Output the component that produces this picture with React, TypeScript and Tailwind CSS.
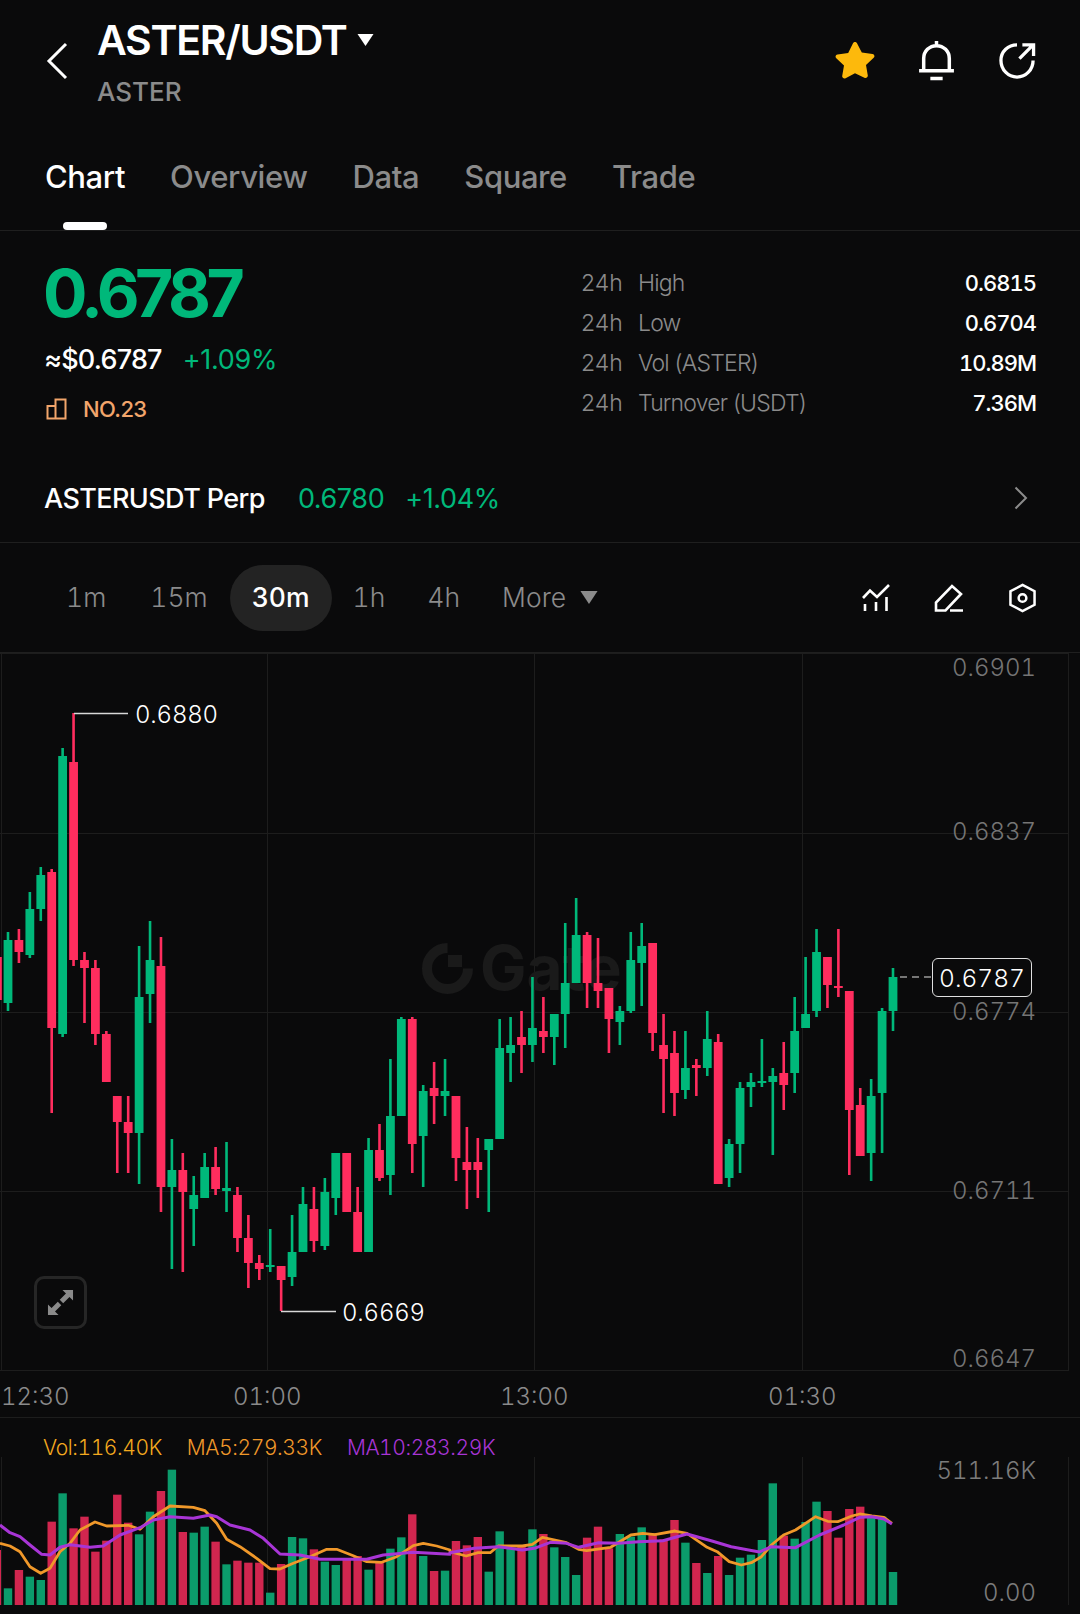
const GREEN = '#00b87a'
const RED = '#ff2d5e'

// g/r, wick top, body top, body bottom, wick bottom (page px)
const candles: [string, number, number, number, number][] = [
  ['g', 932, 940, 1003, 1011], ['r', 929, 940, 952, 963], ['g', 892, 909, 955, 958], ['g', 867, 875, 909, 921],
  ['r', 869, 872, 1028, 1113], ['g', 748, 756, 1034, 1037], ['r', 713, 762, 960, 966], ['r', 952, 960, 968, 1023],
  ['r', 960, 968, 1034, 1045], ['r', 1031, 1034, 1082, 1082], ['r', 1096, 1096, 1122, 1173], ['r', 1096, 1122, 1133, 1173],
  ['g', 946, 997, 1133, 1184], ['g', 921, 960, 994, 1023], ['r', 937, 966, 1187, 1212], ['g', 1139, 1170, 1187, 1269],
  ['r', 1153, 1170, 1192, 1272], ['g', 1176, 1195, 1209, 1246], ['g', 1153, 1167, 1198, 1198], ['r', 1147, 1167, 1189, 1195],
  ['g', 1142, 1188, 1191, 1212], ['r', 1187, 1195, 1238, 1252], ['r', 1215, 1238, 1263, 1288], ['r', 1255, 1263, 1269, 1280],
  ['g', 1229, 1265, 1267, 1272], ['r', 1266, 1266, 1280, 1311], ['g', 1215, 1252, 1277, 1286], ['g', 1187, 1204, 1252, 1252],
  ['r', 1187, 1209, 1241, 1252], ['g', 1178, 1192, 1246, 1250], ['g', 1153, 1153, 1198, 1215], ['r', 1153, 1153, 1212, 1212],
  ['r', 1187, 1212, 1252, 1252], ['g', 1138, 1150, 1252, 1252], ['r', 1124, 1150, 1178, 1181], ['g', 1059, 1116, 1175, 1195],
  ['g', 1017, 1019, 1116, 1116], ['r', 1017, 1019, 1144, 1173], ['g', 1085, 1091, 1136, 1187], ['r', 1062, 1088, 1096, 1124],
  ['g', 1059, 1091, 1096, 1116], ['r', 1096, 1096, 1158, 1181], ['r', 1127, 1162, 1170, 1209], ['r', 1138, 1162, 1170, 1198],
  ['g', 1139, 1139, 1150, 1212], ['g', 1019, 1048, 1139, 1139], ['g', 1017, 1045, 1053, 1082], ['r', 1011, 1037, 1045, 1073],
  ['g', 977, 1028, 1045, 1062], ['r', 997, 1031, 1037, 1053], ['g', 1014, 1014, 1037, 1065], ['g', 923, 983, 1014, 1048],
  ['g', 898, 935, 983, 983], ['r', 932, 935, 983, 1008], ['r', 938, 983, 991, 1008], ['r', 988, 988, 1019, 1053],
  ['g', 1006, 1011, 1022, 1045], ['g', 932, 960, 1011, 1013], ['g', 923, 946, 963, 1006], ['r', 943, 943, 1033, 1051],
  ['r', 1014, 1045, 1059, 1113], ['r', 1031, 1053, 1093, 1116], ['g', 1031, 1068, 1090, 1099], ['r', 1059, 1065, 1068, 1096],
  ['g', 1011, 1039, 1068, 1076], ['r', 1034, 1042, 1184, 1184], ['g', 1139, 1144, 1178, 1187], ['g', 1082, 1088, 1144, 1173],
  ['g', 1073, 1082, 1087, 1107], ['g', 1039, 1081, 1083, 1087], ['g', 1068, 1076, 1082, 1155], ['r', 1042, 1073, 1085, 1110],
  ['g', 997, 1031, 1073, 1093], ['g', 957, 1014, 1028, 1028], ['g', 929, 952, 1011, 1017], ['r', 957, 957, 985, 1008],
  ['r', 929, 986, 988, 997], ['r', 991, 991, 1110, 1175], ['r', 1088, 1105, 1156, 1156], ['g', 1079, 1096, 1153, 1181],
  ['g', 1008, 1011, 1093, 1153], ['g', 968, 977, 1011, 1031],
]

// tops of the volume bars, read at 3x from y=1420
const volTops = [
  505, 450, 470, 480, 305, 220, 325, 290, 395, 362, 224, 308, 343, 275, 213, 149, 336, 338, 320, 365, 433, 422, 428, 428,
  518, 432, 351, 355, 388, 425, 435, 420, 408, 449, 428, 386, 352, 283, 408, 453, 452, 363, 376, 351, 455, 334, 385, 380,
  328, 342, 382, 411, 465, 353, 320, 385, 342, 350, 322, 340, 358, 300, 368, 429, 459, 408, 465, 413, 404, 360, 190, 347,
  356, 306, 245, 273, 353, 267, 260, 290, 290, 456,
]

const ma5Left = [[0,370],[30,378],[60,395],[90,440],[122,460],[150,445],[180,395],[210,370],[240,330],[285,306],[320,318],[385,316],[420,328],[460,290],[510,258],[580,262],[615,272],[650,310],[680,358],[720,380],[770,415],[810,446],[840,447],[880,430],[930,410],[980,388],[1010,388],[1060,407],[1100,425],[1145,427],[1190,410],[1240,377],[1270,370],[1310,378],[1350,390]]
const ma5Right = [[0,395],[40,408],[70,398],[100,398],[120,378],[180,378],[205,373],[230,352],[290,368],[320,388],[340,392],[400,382],[450,345],[480,340],[510,344],[560,333],[590,340],[640,382],[665,395],[695,425],[725,435],[750,428],[775,410],[800,375],[830,345],[860,330],[910,290],[940,304],[965,305],[1000,288],[1020,282],[1050,288],[1080,292],[1100,310]]
const ma10Left = [[0,315],[30,338],[60,350],[90,375],[125,403],[150,405],[180,382],[210,374],[270,382],[310,378],[360,345],[420,323],[460,300],[510,290],[580,295],[630,285],[650,290],[690,315],[750,330],[790,355],[840,402],[900,405],[960,418],[1040,418],[1100,418],[1150,405],[1240,397],[1350,403]]
const ma10Right = [[0,398],[60,385],[120,380],[180,390],[210,385],[250,367],[290,370],[320,382],[370,368],[420,370],[470,365],[530,362],[590,342],[650,362],[700,380],[770,396],[800,380],[860,383],[920,345],[980,315],[1020,292],[1050,290],[1080,297],[1100,312]]

const toPoints = (left: number[][], right: number[][]) =>
  [
    ...left.map(([x, y]) => `${(x / 3).toFixed(1)},${(1420 + y / 3).toFixed(1)}`),
    ...right.map(([x, y]) => `${(450 + x / 2.489).toFixed(1)},${(1420 + y / 3).toFixed(1)}`),
  ].join(' ')

const candleX = (i: number) => 8 + i * 10.926

const Triangle = ({ className, color }: { className: string; color: string }) => (
  <svg viewBox="0 0 18 14" className={className}>
    <path d="M1 1h16l-8 12z" fill={color} />
  </svg>
)

const Header = () => (
  <div className="flex h-[150px] items-start pl-[46px] pr-[44px]">
    <svg viewBox="0 0 22 38" className="mt-[42px] h-[38px] w-[22px]" fill="none" stroke="#fff" strokeWidth="3">
      <path d="M20 2 3 19l17 17" />
    </svg>
    <div className="ml-[29px] flex-1 pt-[14px]">
      <div className="flex items-center">
        <span className="text-[41px] leading-[52px] font-semibold tracking-[-1.3px] text-white">ASTER/USDT</span>
        <Triangle className="ml-[10px] h-[14px] w-[19px]" color="#fff" />
      </div>
      <div className="mt-[10px] text-[26px] leading-[32px] font-medium text-[#8b8b8b]">ASTER</div>
    </div>
    <div className="mt-[40px] flex items-center">
      <svg viewBox="0 0 40 38" className="h-[38px] w-[40px]">
        <path
          d="M20 1.5c.9 0 1.600.5 2 1.300l4.800 9.900 10.700 1.600c1.900.3 2.600 2.600 1.200 3.900l-7.700 7.700 1.800 10.900c.3 1.900-1.700 3.300-3.400 2.400L20 34.600l-9.400 5.100c-1.700.900-3.700-.5-3.400-2.400L9 26.400 1.300 18.700C-.1 17.400.6 15.100 2.500 14.800l10.700-1.600L18 2.800c.4-.8 1.100-1.300 2-1.300z"
          transform="translate(0 -1.500) scale(1 .95)"
          fill="#fdb90c"
        />
      </svg>
      <svg viewBox="0 0 36 40" className="ml-[43px] h-[41px] w-[37px]" fill="none" stroke="#fff" strokeWidth="3.400">
        <path d="M18 1v5M1 30h34M5.500 30V18C5.500 11 11 5.500 18 5.500S30.500 11 30.500 18v12M12 37.500h12" />
      </svg>
      <svg viewBox="0 0 38 38" className="ml-[44px] h-[37px] w-[37px]" fill="none" stroke="#fff" strokeWidth="3.400">
        <path d="M35 19c0 9.400-7.300 17-16.500 17S2 28.400 2 19 9.400 3 18.500 3M21 17 34 4M24 3h11.500v11.500" />
      </svg>
    </div>
  </div>
)

const tabs = ['Chart', 'Overview', 'Data', 'Square', 'Trade']

const Tabs = () => (
  <div className="relative flex h-[81px] gap-[45px] border-b border-[#1f1f1f] pl-[45px] pt-[7px]">
    {tabs.map((t, i) => (
      <span key={t} className={`text-[31px] leading-[40px] font-medium tracking-[-0.4px] ${i === 0 ? 'text-white' : 'text-[#8b8b8b]'}`}>
        {t}
      </span>
    ))}
    <div className="absolute left-[63px] bottom-0 h-[8px] w-[44px] rounded-full bg-white" />
  </div>
)

const stats = [
  ['High', '0.6815'],
  ['Low', '0.6704'],
  ['Vol (ASTER)', '10.89M'],
  ['Turnover (USDT)', '7.36M'],
]

const PriceBlock = () => (
  <div className="flex h-[210px] pl-[44px] pr-[44px]">
    <div className="w-[537px]">
      <div className="-ml-[1px] pt-[22px] text-[66px] leading-[80px] font-bold tracking-[-4.500px] text-[#00b87a]">0.6787</div>
      <div className="mt-[10px] flex items-center text-[27px] leading-[34px]">
        <span className="font-medium tracking-[-0.8px] text-white">≈$0.6787</span>
        <span className="ml-[21px] tracking-[-0.3px] text-[#00b87a]">+1.09%</span>
      </div>
      <div className="mt-[18px] ml-[2px] flex items-center">
        <svg viewBox="0 0 22 22" className="h-[22px] w-[22px]" fill="none" stroke="#f2a56b" strokeWidth="2">
          <path d="M1.500 8h8v12.500h-8zM9.500 20.500V1.500h10v19z" />
        </svg>
        <span className="ml-[15px] text-[22px] leading-[28px] font-medium tracking-[-0.6px] text-[#f2a56b]">NO.23</span>
      </div>
    </div>
    <div className="flex flex-1 flex-col gap-[10px] pt-[37px]">
      {stats.map(([label, value]) => (
        <div key={label} className="flex h-[30px] items-center text-[23px]">
          <span className="w-[57px] font-light text-[#8b8b8b]">24h</span>
          <span className="flex-1 font-light tracking-[-0.8px] text-[#8b8b8b]">{label}</span>
          <span className="text-[22px] font-medium tracking-[-1px] tabular-nums text-white">{value}</span>
        </div>
      ))}
    </div>
  </div>
)

const PerpRow = () => (
  <div className="flex h-[102px] items-center border-b border-[#1f1f1f] pl-[44px] pr-[52px] pt-[16px] text-[27px] tracking-[-0.4px]">
    <span className="font-medium tracking-[-0.6px] text-white">ASTERUSDT Perp</span>
    <span className="ml-[33px] text-[#00b87a]">0.6780</span>
    <span className="ml-[21px] text-[#00b87a]">+1.04%</span>
    <svg viewBox="0 0 14 24" className="mb-[4px] ml-auto h-[24px] w-[14px]" fill="none" stroke="#8b8b8b" strokeWidth="2">
      <path d="m1.500 1.500 10.500 10.500-10.500 10.500" />
    </svg>
  </div>
)

const intervals = ['1m', '15m', '30m', '1h', '4h']

const Toolbar = () => (
  <div className="flex h-[110px] items-center border-b border-[#1f1f1f] pl-[44px] pr-[44px] text-[26.500px] font-light tabular-nums">
    {intervals.map((t) => (
      <span
        key={t}
        className={`flex h-[66px] items-center rounded-full ${t === '1h' || t === '4h' ? 'px-[21px]' : 'px-[22px]'} ${t === '30m' ? 'bg-[#232323] font-medium text-white' : 'text-[#8b8b8b]'}`}
      >
        {t}
      </span>
    ))}
    <span className="flex h-[66px] items-center pl-[21px] text-[#8b8b8b]">More</span>
    <Triangle className="ml-[13px] h-[15px] w-[20px]" color="#8b8b8b" />
    <div className="ml-auto flex items-center">
      <svg viewBox="0 0 28 28" className="h-[28px] w-[28px]" fill="none" stroke="#fff" strokeWidth="2.600">
        <path d="M1 14 8 6.500l7 6.500L27 1M3 20v7M14 18v9M24.500 13v14" />
      </svg>
      <svg viewBox="0 0 30 28" className="ml-[44px] h-[28px] w-[30px]" fill="none" stroke="#fff" strokeWidth="2.600">
        <path d="M2 26.500V18.500L18 2l9 8-15.500 16.500zM16 26.500h13" />
      </svg>
      <svg viewBox="0 0 28 30" className="ml-[45px] h-[30px] w-[27px]" fill="none" stroke="#fff" strokeWidth="2.600">
        <path d="M14 1.500 26.500 8v14L14 28.500 1.500 22V8z" />
        <circle cx="14" cy="15" r="4" />
      </svg>
    </div>
  </div>
)

const priceLabels = [
  ['0.6901', 'top-[1px]'],
  ['0.6837', 'top-[165px]'],
  ['0.6774', 'top-[345px]'],
  ['0.6711', 'top-[524px]'],
  ['0.6647', 'top-[692px]'],
]

const PriceChart = () => (
  <div className="relative h-[718px] tabular-nums">
    <svg viewBox="0 653 1080 718" className="absolute inset-0 h-full w-full">
      <g stroke="#1d1d1d" strokeWidth="1">
        {[653.5, 833.5, 1012.5, 1191.5, 1370.5].map((y) => (
          <line key={y} x1="0" x2="1068" y1={y} y2={y} />
        ))}
        {[1.5, 267.5, 534.5, 802.5, 1068.5].map((x) => (
          <line key={x} x1={x} x2={x} y1="653" y2="1371" />
        ))}
      </g>
      <g fill="#1a1a1a">
        <path d="M447.500 948A20.500 20.500 0 1 0 468 968.500" fill="none" stroke="#1a1a1a" strokeWidth="10" />
        <rect x="448" y="955" width="14" height="12" />
        <text x="480" y="990" fontFamily="Inter, sans-serif" fontWeight="700" fontSize="62">Gate</text>
      </g>
      <rect x="-7" y="957" width="8.800" height="43" fill={RED} />
      {candles.map(([c, top, bodyTop, bodyBottom, bottom], i) => {
        const x = candleX(i)
        const fill = c === 'g' ? GREEN : RED
        return (
          <g key={i} fill={fill}>
            <rect x={x - 1.3} y={top} width="2.600" height={bottom - top} />
            <rect x={x - 4.400} y={bodyTop} width="8.800" height={Math.max(bodyBottom - bodyTop, 2)} />
          </g>
        )
      })}
      <path d="M74 713.500h54M281 1311.500h55" stroke="#d8d8d8" strokeWidth="1.500" />
      <path d="M900 977h32" stroke="#9a9a9a" strokeWidth="1.500" strokeDasharray="7 5" />
    </svg>
    {priceLabels.map(([p, top]) => (
      <span key={p} className={`absolute right-[44px] text-[24px] leading-[28px] font-light text-[#757575] ${top}`}>
        {p}
      </span>
    ))}
    <span className="absolute left-[135px] top-[48px] text-[24px] leading-[28px] font-light tracking-[-0.2px] text-white">0.6880</span>
    <span className="absolute left-[342px] top-[646px] text-[24px] leading-[28px] font-light tracking-[-0.2px] text-white">0.6669</span>
    <span className="absolute left-[932px] top-[305px] flex h-[39px] w-[100px] items-center justify-center rounded-[6px] border border-[#e0e0e0] bg-[#0a0a0b] pt-[1px] text-[24.500px] font-light text-white">
      0.6787
    </span>
    <div className="absolute left-[34px] top-[623px] flex h-[53px] w-[53px] items-center justify-center rounded-[10px] border-[3px] border-[#262626]">
      <svg viewBox="0 0 28 28" className="h-[27px] w-[27px]" fill="#8a8a8a">
        <path d="M16 1h11v11l-3.700-3.700-6.500 6.500-3.600-3.600 6.500-6.500zM12 27H1V16l3.700 3.700 6.500-6.500 3.600 3.600-6.500 6.500z" />
      </svg>
    </div>
  </div>
)

const TimeAxis = () => (
  <div className="relative h-[47px] border-b border-[#1d1d1d] text-[24px] leading-[30px] font-light tabular-nums text-[#8b8b8b]">
    <span className="absolute left-[1px] top-[11px]">12:30</span>
    <span className="absolute left-[233px] top-[11px]">01:00</span>
    <span className="absolute left-[500px] top-[11px]">13:00</span>
    <span className="absolute left-[768px] top-[11px]">01:30</span>
  </div>
)

const VolumePanel = () => (
  <div className="relative h-[196px] tabular-nums">
    <svg viewBox="0 1418 1080 196" className="absolute inset-0 h-full w-full">
      <g stroke="#1d1d1d" strokeWidth="1">
        {[1.5, 267.5, 534.5, 802.5, 1068.5].map((x) => (
          <line key={x} x1={x} x2={x} y1="1457" y2="1605" />
        ))}
      </g>
      <rect x="-7" y="1550" width="8" height="55" fill="#d1264f" />
      {volTops.map((t, i) => {
        const y = 1420 + t / 3
        return (
          <rect
            key={i}
            x={candleX(i) - 4.200}
            y={y}
            width="8.400"
            height={1605 - y}
            fill={candles[i][0] === 'g' ? '#0b9b6b' : '#d1264f'}
          />
        )
      })}
      <polyline points={toPoints(ma5Left, ma5Right)} fill="none" stroke="#f0982a" strokeWidth="2.800" strokeLinejoin="round" />
      <polyline points={toPoints(ma10Left, ma10Right)} fill="none" stroke="#a835d6" strokeWidth="3" strokeLinejoin="round" />
    </svg>
    <div className="absolute left-[43px] top-[17px] flex text-[21px] leading-[26px] font-light tracking-[-0.4px]">
      <span className="text-[#f3a91f]">Vol:116.40K</span>
      <span className="ml-[25px] text-[#f0982a]">MA5:279.33K</span>
      <span className="ml-[25px] text-[#a835d6]">MA10:283.29K</span>
    </div>
    <span className="absolute right-[44px] top-[39px] text-[24px] leading-[28px] font-light text-[#7c7c7c]">511.16K</span>
    <span className="absolute right-[44px] top-[161px] text-[24px] leading-[28px] font-light text-[#7c7c7c]">0.00</span>
  </div>
)

export default function App() {
  return (
    <div className="flex h-[1614px] w-[1080px] flex-col overflow-hidden bg-[#0a0a0b] font-[family-name:Inter,sans-serif]">
      <Header />
      <Tabs />
      <PriceBlock />
      <PerpRow />
      <Toolbar />
      <PriceChart />
      <TimeAxis />
      <VolumePanel />
    </div>
  )
}
